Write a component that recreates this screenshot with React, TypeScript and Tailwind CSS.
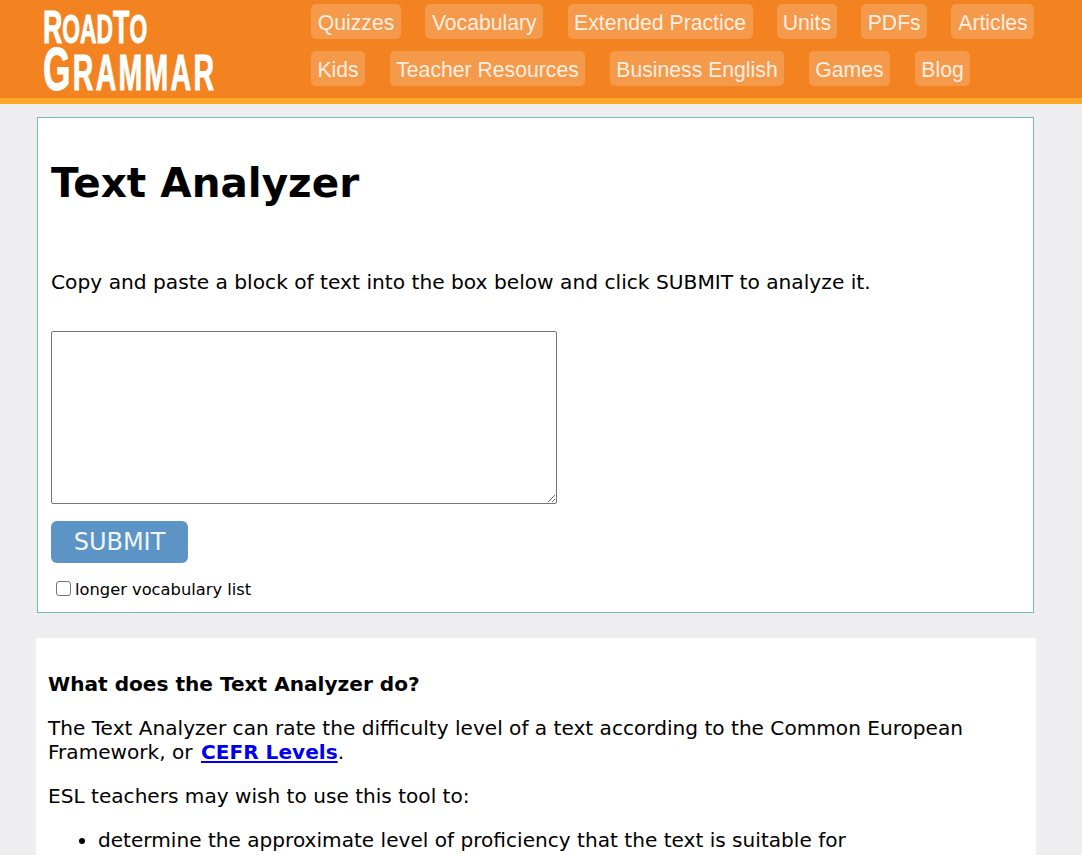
const NAV_ROWS = [
  [
    { label: "Quizzes", w: "w-[90px]" },
    { label: "Vocabulary", w: "w-[118px]" },
    { label: "Extended Practice", w: "w-[185px]" },
    { label: "Units", w: "w-[60px]" },
    { label: "PDFs", w: "w-[66px]" },
    { label: "Articles", w: "w-[83px]" },
  ],
  [
    { label: "Kids", w: "w-[54px]" },
    { label: "Teacher Resources", w: "w-[195px]" },
    { label: "Business English", w: "w-[174px]" },
    { label: "Games", w: "w-[81px]" },
    { label: "Blog", w: "w-[55px]" },
  ],
];

function Logo() {
  return (
    <div className="ml-[43px] w-[175px] shrink-0 pt-[6px] font-['Liberation_Sans',sans-serif] font-bold text-white [-webkit-text-stroke:1px_white]">
      <div className="h-[38px] origin-left scale-x-[0.57] whitespace-nowrap text-[47px] leading-[42px]">
        R<span className="text-[40px]">OAD</span>T<span className="text-[40px]">O</span>
      </div>
      <div className="h-[50px] origin-left scale-x-[0.57] whitespace-nowrap text-[62px] leading-[50px] tracking-[4px]">
        G<span className="text-[50px]">RAMMAR</span>
      </div>
    </div>
  );
}

export default function App() {
  return (
    <div className="h-[855px] overflow-hidden bg-[#eeedef] font-['DejaVu_Sans',sans-serif] text-black">
      <header className="flex h-[104px] border-b-[6px] border-[#ffa829] bg-[#f28320]">
        <Logo />
        <nav className="ml-[93px] flex flex-col gap-[12px] pt-[4px]">
          {NAV_ROWS.map((row, i) => (
            <div key={i} className={i === 0 ? "flex gap-[24.3px]" : "flex gap-[25px]"}>
              {row.map((item) => (
                <a
                  key={item.label}
                  className={`${item.w} h-[35px] whitespace-nowrap rounded-[5px] bg-[#f49a4a] text-center font-['Liberation_Sans',sans-serif] text-[21.2px] leading-[37px] text-[#fbeee2]`}
                >
                  {item.label}
                </a>
              ))}
            </div>
          ))}
        </nav>
      </header>

      <main className="ml-[37px] mt-[13px] h-[496px] w-[997px] border border-[#6fbfa9] bg-white px-[13px]">
        <h1 className="pt-[41px] text-[40.5px] font-bold leading-[48px]">Text Analyzer</h1>
        <p className="mt-[61px] text-[20.2px] leading-[28px]">
          Copy and paste a block of text into the box below and click SUBMIT to analyze it.
        </p>
        <textarea className="mt-[35px] block h-[173px] w-[506px] rounded-[2px] border border-[#767676] bg-white" />
        <button className="mt-[17px] block h-[42px] w-[137px] rounded-[6px] bg-[#5b94c5] text-center text-[24px] text-[#eef5fb]">
          SUBMIT
        </button>
        <label className="ml-[5px] mt-[15px] flex items-center gap-[4px] text-[16.3px] leading-[24px]">
          <input type="checkbox" className="-mt-[4px] h-[15px] w-[15px] appearance-none rounded-[3px] border border-[#767676] bg-white" />
          longer vocabulary list
        </label>
      </main>

      <section className="ml-[36px] mt-[25px] h-[217px] w-[1000px] bg-white px-[12px] pt-[34px] text-[20.1px] leading-[24px]">
        <h2 className="font-bold">What does the Text Analyzer do?</h2>
        <p className="mt-[20px]">
          The Text Analyzer can rate the difficulty level of a text according to the Common European Framework, or{" "}
          <a className="ml-[2px] font-bold text-[#0000ee] underline">CEFR Levels</a>.
        </p>
        <p className="mt-[20px]">ESL teachers may wish to use this tool to:</p>
        <ul className="mt-[20px] list-disc pl-[50px]">
          <li>determine the approximate level of proficiency that the text is suitable for</li>
        </ul>
      </section>
    </div>
  );
}
